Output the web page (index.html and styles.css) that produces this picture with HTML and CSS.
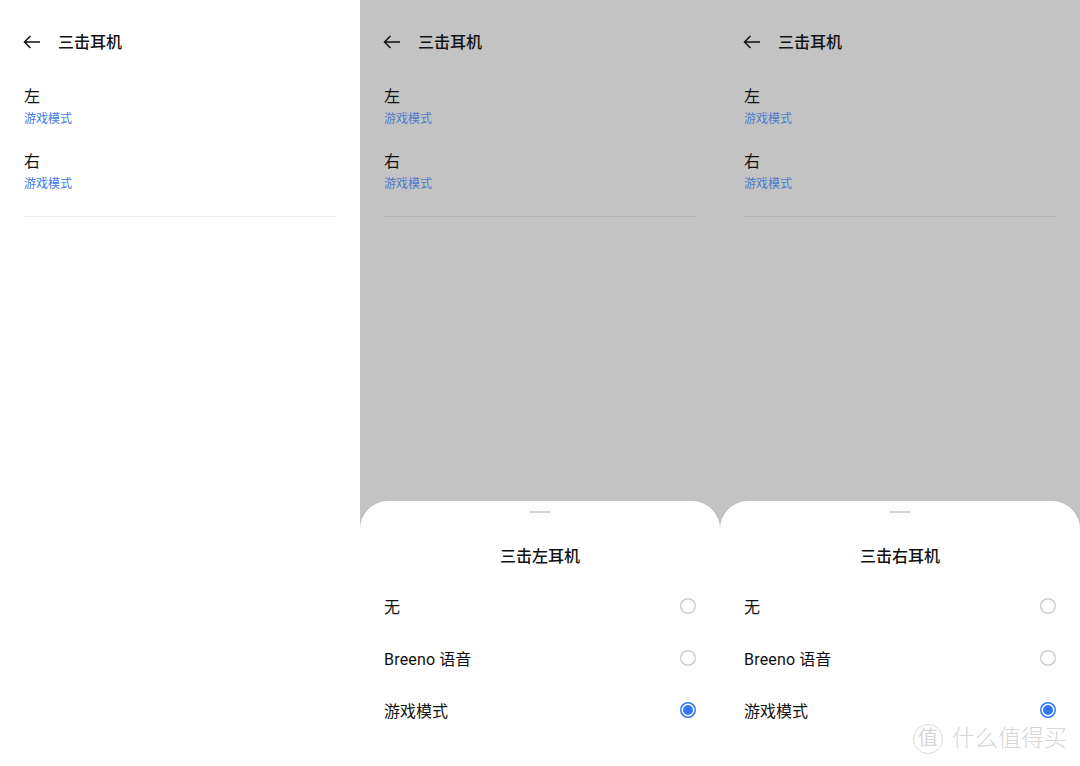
FILE: index.html
```html
<!DOCTYPE html>
<html lang="zh-CN">
<head>
    <meta charset="UTF-8">
    <title>三击耳机</title>
    <link rel="stylesheet" href="styles.css">
</head>
<body>
    <div class="screens">
        <!-- settings page -->
        <section class="screen">
            <header class="top-bar">
                <svg class="back" width="18" height="14" viewBox="0 0 18 14"><path d="M17 7H1.5M7.5 1 1.5 7l6 6"/></svg>
                <h1>三击耳机</h1>
            </header>
            <div class="setting"><p>左</p><span>游戏模式</span></div>
            <div class="setting"><p>右</p><span>游戏模式</span></div>
            <hr>
        </section>

        <!-- left earbud sheet -->
        <section class="screen dimmed">
            <header class="top-bar">
                <svg class="back" width="18" height="14" viewBox="0 0 18 14"><path d="M17 7H1.5M7.5 1 1.5 7l6 6"/></svg>
                <h1>三击耳机</h1>
            </header>
            <div class="setting"><p>左</p><span>游戏模式</span></div>
            <div class="setting"><p>右</p><span>游戏模式</span></div>
            <hr>
            <div class="sheet">
                <div class="handle"></div>
                <h2>三击左耳机</h2>
                <div class="option"><span>无</span><i class="radio"></i></div>
                <div class="option"><span><b class="latin">Breeno</b> 语音</span><i class="radio"></i></div>
                <div class="option"><span>游戏模式</span><i class="radio on"></i></div>
            </div>
        </section>

        <!-- right earbud sheet -->
        <section class="screen dimmed">
            <header class="top-bar">
                <svg class="back" width="18" height="14" viewBox="0 0 18 14"><path d="M17 7H1.5M7.5 1 1.5 7l6 6"/></svg>
                <h1>三击耳机</h1>
            </header>
            <div class="setting"><p>左</p><span>游戏模式</span></div>
            <div class="setting"><p>右</p><span>游戏模式</span></div>
            <hr>
            <div class="sheet">
                <div class="handle"></div>
                <h2>三击右耳机</h2>
                <div class="option"><span>无</span><i class="radio"></i></div>
                <div class="option"><span><b class="latin">Breeno</b> 语音</span><i class="radio"></i></div>
                <div class="option"><span>游戏模式</span><i class="radio on"></i></div>
            </div>
        </section>
    </div>

    <div class="watermark">
        <span class="seal">值</span>
        <span class="mark-text">什么值得买</span>
    </div>
</body>
</html>
```

FILE: styles.css
```css
* {
  box-sizing: border-box;
}

html,
body {
  margin: 0;
  height: 766px;
  overflow: hidden;
}

body {
  position: relative;
  background: #fff;
  color: #111;
  font-family: Roboto, "Noto Sans CJK SC", sans-serif;
}

.screens {
  display: flex;
  height: 766px;
}

.screen {
  position: relative;
  width: 360px;
  height: 766px;
  padding: 0 24px;
  overflow: hidden;
}

.dimmed {
  background: #c3c3c3;
}

.top-bar {
  display: flex;
  align-items: center;
  gap: 17px;
  height: 24px;
  margin: 30px 0 29px -1px;
}

.back {
  fill: none;
  stroke: #111;
  stroke-width: 1.5;
}

.top-bar h1 {
  margin: 0;
  padding-top: 2px;
  font-size: 16px;
  font-weight: 500;
  line-height: 24px;
}

.setting {
  height: 65px;
}

.setting p {
  margin: 0;
  padding-top: 2px;
  font-size: 16px;
  line-height: 24px;
}

.setting span {
  display: block;
  font-size: 12px;
  line-height: 20px;
  color: #3a7be8;
}

.dimmed .setting span {
  color: #4a7bc8;
}

hr {
  margin: 3px 0 0;
  border: 0;
  border-top: 1px solid #ececec;
}

.dimmed hr {
  border-top-color: #b6b6b6;
}

.sheet {
  position: absolute;
  left: 0;
  right: 0;
  bottom: 0;
  height: 265px;
  padding: 10px 24px 0;
  background: #fff;
  border-radius: 28px 28px 0 0;
}

.handle {
  width: 22px;
  height: 2px;
  margin: 0 auto;
  border-radius: 1px;
  background: #d4d4d4;
}

.sheet h2 {
  margin: 32px 0 11px;
  font-size: 16px;
  font-weight: 500;
  line-height: 24px;
  text-align: center;
}

.option {
  display: flex;
  align-items: center;
  justify-content: space-between;
  height: 52px;
  font-size: 16px;
}

.latin {
  font-weight: 400;
  letter-spacing: 0.2px;
}

.radio {
  display: flex;
  align-items: center;
  justify-content: center;
  width: 16px;
  height: 16px;
  border-radius: 50%;
  box-shadow: inset 0 0 0 1.5px #cfcfcf;
}

.radio.on {
  box-shadow: inset 0 0 0 1.5px #3478f6;
}

.radio.on::after {
  content: "";
  width: 10px;
  height: 10px;
  border-radius: 50%;
  background: #3478f6;
}

.watermark {
  position: absolute;
  left: 913px;
  top: 724px;
  display: flex;
  align-items: center;
  gap: 9px;
  color: #d6d6d6;
}

.seal {
  width: 30px;
  height: 30px;
  border: 1px solid #dcdcdc;
  border-radius: 50%;
  font-size: 20px;
  line-height: 27px;
  text-align: center;
}

.mark-text {
  font-size: 23px;
  font-weight: 300;
  line-height: 30px;
}
```
